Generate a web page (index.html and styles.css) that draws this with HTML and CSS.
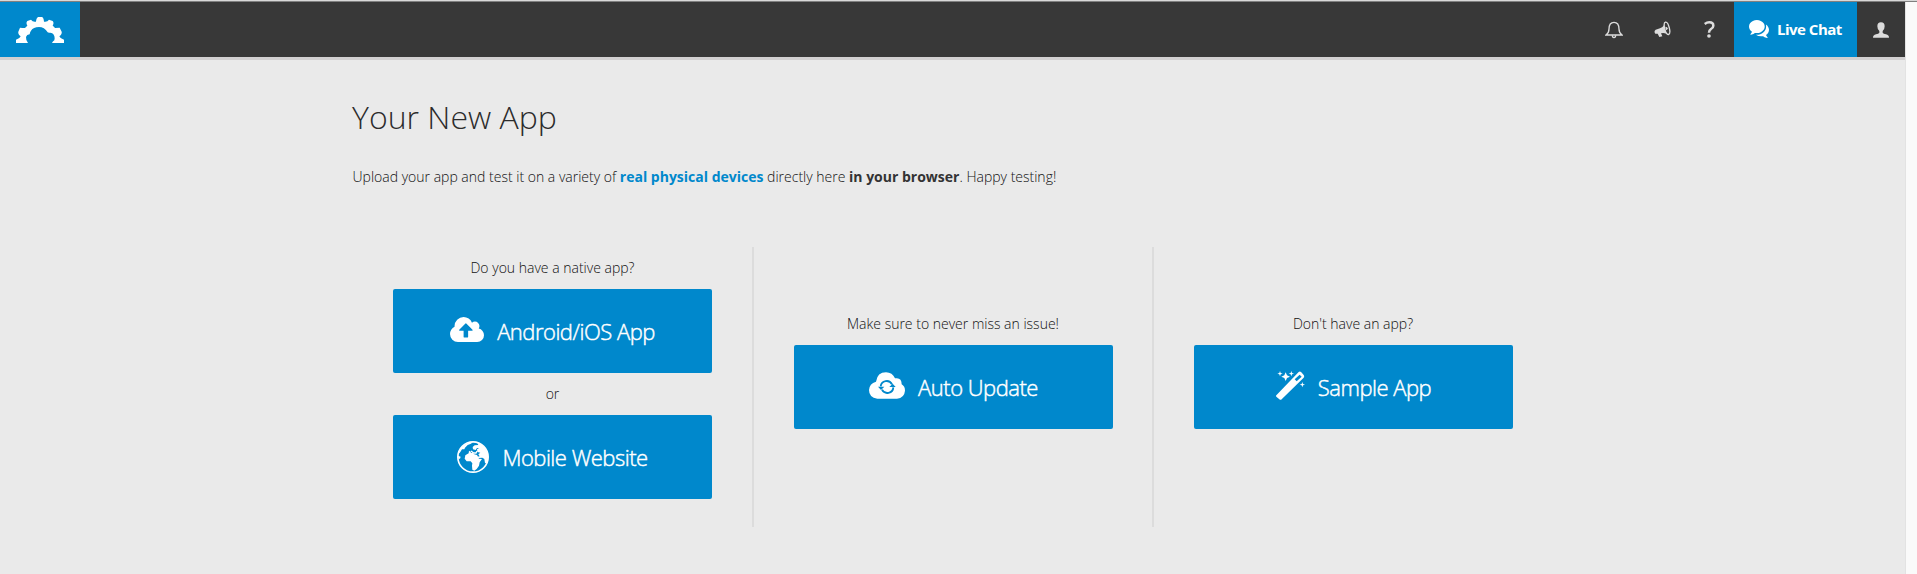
FILE: index.html
```html
<!DOCTYPE html>
<html lang="en">
<head>
<meta charset="utf-8">
<title>Your New App</title>
<link rel="stylesheet" href="styles.css">
</head>
<body>
<div class="window-edge"></div>
<div class="frame">
  <div class="page">
    <header class="topbar">
      <a class="logo" aria-label="Home">
        <svg width="48" height="26" viewBox="48 51 144 78"><path fill="#fff" d="M48 129V119Q59 117 62 109Q53 101 55 95L60 83Q67 84 75 84Q79 79 82 77Q77 68 82 63L93 59Q98 67 108 65Q109 53 115 51H126Q131 53 132 65Q142 67 147 59L158 63Q163 68 158 77Q162 80 165 84L179 83L185 95Q187 101 178 109Q181 117 192 119V129H156Q158 124 163 121L164 115Q164 100 151 98Q145 99 143 97Q133 81 117 81Q100 81 93 92Q90 96 89 103Q80 104 78 111Q77 118 84 129Z"/></svg>
      </a>
      <nav class="tools">
        <svg class="bell" width="18" height="18" viewBox="0 0 54 54"><g fill="none" stroke="#dcdcdc" stroke-width="4"><path d="M3 42Q12 36 12 24Q12 4 27 4Q42 4 42 24Q42 36 51 42Z"/><path d="M22 43Q22 50 27 50Q32 50 32 43"/></g></svg>
        <svg class="horn" width="17" height="17" viewBox="0 0 51 51"><path fill="#dcdcdc" d="M34 2Q32 16 18 22L5 26Q0 29 2 35Q4 40 11 38L16 48L25 46L21 37Q33 34 43 41Z"/><ellipse cx="39" cy="22" rx="7" ry="19" transform="rotate(-14 39 22)" fill="#383838" stroke="#dcdcdc" stroke-width="4"/><path fill="#dcdcdc" d="M34 17Q41 17 41 22Q41 27 36 28Z"/></svg>
        <svg class="help" width="11" height="17" viewBox="0 0 33 51"><path fill="none" stroke="#dcdcdc" stroke-width="7.500" d="M2 9Q9 4 16 4Q28 4 28 14Q28 20 21 24Q15 28 15 35"/><circle cx="15" cy="45" r="5.500" fill="#dcdcdc"/></svg>
      </nav>
      <a class="chat">
        <svg width="20" height="18" viewBox="0 256 1792 1408" preserveAspectRatio="none"><path fill="#fff" d="M1408 768q0 139-94 257t-256.500 186.500-353.500 68.500q-86 0-176-16-124 88-278 128-36 9-86 16h-3q-11 0-20.500-8t-11.500-21q-1-3-1-6.500t.5-6.500 2-6l2.500-5 3.500-5.500 4-5 4.500-5 4-4.500q5-6 23-25t26-29.500 22.500-29 25-38.500 20.500-44q-124-72-195-177t-71-224q0-139 94-257t256.500-186.500 353.500-68.500 353.500 68.500 256.500 186.500 94 257zm384 256q0 120-71 224.500t-195 176.500q10 24 20.500 44t25 38.500 22.500 29 26 29.500 23 25q1 1 4 4.500t4.500 5 4 5 3.500 5.500l2.500 5 2 6 .5 6.500-1 6.500q-3 14-13 22t-22 7q-50-7-86-16-154-40-278-128-90 16-176 16-271 0-472-132 58 4 88 4 161 0 309-45t264-129q125-92 192-212t67-254q0-77-23-152 129 71 204 178t75 230z"/></svg>
        <span>Live Chat</span>
      </a>
      <a class="user" aria-label="Account">
        <svg width="16" height="16" viewBox="0 0 48 48"><path fill="#dcdcdc" d="M24 1Q35 1 35 13Q35 22 29 27V32Q31 35 39 37Q48 39 48 47H0Q0 39 9 37Q17 35 19 32V27Q13 22 13 13Q13 1 24 1Z"/></svg>
      </a>
    </header>
    <main class="content">
      <h1 class="title">Your New App</h1>
      <p class="intro">Upload your app and test it on a variety of <a class="link">real physical devices</a> directly here <b>in your browser</b>. Happy testing!</p>
      <div class="choices">
        <section class="choice choice-double">
          <p class="label">Do you have a native app?</p>
          <a class="button">
            <svg class="raised" width="34" height="25" viewBox="0 128 1920 1408"><path fill="#fff" d="M1280 864q0-14-9-23l-352-352q-9-9-23-9t-23 9l-351 351q-10 12-10 24 0 14 9 23t23 9h224v352q0 13 9.500 22.500t22.500 9.500h192q13 0 22.500-9.500t9.500-22.500v-352h224q13 0 22.500-9.500t9.500-22.500zm640 288q0 159-112.500 271.500t-271.500 112.500h-1088q-185 0-316.500-131.500t-131.500-316.500q0-130 70-240t188-165q-2-30-2-43 0-212 150-362t362-150q156 0 285.500 87t188.500 231q71-62 166-62 106 0 181 75t75 181q0 76-41 138 130 31 213.500 135.500t83.500 238.500z"/></svg>
            <span>Android/iOS App</span>
          </a>
          <p class="label or">or</p>
          <a class="button">
            <svg width="32" height="32" viewBox="0 0 96 96"><circle cx="48" cy="48" r="45.500" fill="none" stroke="#fff" stroke-width="5"/><path fill="#fff" d="M5 38Q8 18 28 8Q36 4 48 3L42 8L32 12L24 20L22 25L15 25L10 33ZM3 44L11 47L9 53H4Z"/><path fill="#fff" d="M60 4Q86 14 93 40Q95 54 90 68L84 66L82 54L76 50L64 51L61 47L68 46L64 40L70 35L61 33L60 25L66 21L60 21L56 27L48 25L47 18L53 13L64 12Z"/><path fill="#fff" d="M36 29L42 33L41 36L48 36L52 40L60 42L66 53L75 54L68 64L66 74L59 84L52 89L46 86L45 74L46 67L41 61L29 61L23 53L25 43L35 37Z"/><path fill="none" stroke="#fff" stroke-width="4" d="M42 30L50 36L57 36L60 30"/></svg>
            <span>Mobile Website</span>
          </a>
        </section>
        <section class="choice">
          <p class="label">Make sure to never miss an issue!</p>
          <a class="button">
            <svg class="raised" width="36" height="27" viewBox="0 0 108 81"><path fill="#fff" d="M25 80Q0 77 0 54Q1 35 21 29Q25 1 51 1Q70 1 78 19Q98 15 98 37Q108 43 108 56Q106 78 84 80Z"/><g fill="none" stroke="#0088cc" stroke-width="5.500"><path d="M35 43A18 18 0 0 1 69 37M73 46A18 18 0 0 1 39 53"/></g><path fill="#0088cc" d="M27 44H46L36 54ZM61 45H80L71 35Z"/></svg>
            <span>Auto Update</span>
          </a>
        </section>
        <section class="choice">
          <p class="label">Don't have an app?</p>
          <a class="button">
            <svg class="raised" width="29" height="29" viewBox="0 0 87 87"><path fill="#fff" fill-rule="evenodd" d="M1 73L68 3Q72 0 76 4L83 12Q86 16 83 20L17 85Q14 88 10 85L1 77Q-1 75 1 73ZM56 25L62 31L77 17L71 11Z"/><path fill="#fff" d="M29 4L33 13L42 17L33 21L29 30L25 21L16 17L25 13ZM12 0L14 6L20 8L14 10L12 16L10 10L4 8L10 6ZM46 0L48 6L54 8L48 10L46 16L44 10L38 8L44 6ZM79 33L81 39L87 41L81 43L79 49L77 43L71 41L77 39Z"/></svg>
            <span>Sample App</span>
          </a>
        </section>
      </div>
    </main>
  </div>
  <div class="scroll-track"></div>
</div>
</body>
</html>
```
FILE: styles.css
```css
* { box-sizing: border-box; }
body {
  margin: 0;
  height: 574px;
  overflow: hidden;
  background: #eaeaea;
  color: #111;
  font-family: "Open Sans", "Noto Sans", sans-serif;
  font-size: 14px;
  font-weight: 300;
}
.window-edge { height: 2px; background: #d8d8d8; border-bottom: 1px solid #808080; }
.frame { display: flex; height: 572px; }
.page { flex: 1; }
.scroll-track { width: 12px; background: #fafafa; border-left: 1px solid #e3e3e3; }
.topbar {
  display: flex;
  height: 58px;
  background: #383838;
  border-bottom: 3px solid #d2d0d1;
}
.logo { width: 80px; padding: 15px 16px; background: #0088cc; }
.logo svg, .tools svg, .chat svg, .user svg { display: block; }
.tools { display: flex; margin-left: auto; padding-top: 19px; }
.bell { margin-right: 31px; }
.horn { margin-right: 33px; }
.help { margin-right: 19px; }
.chat {
  display: flex;
  width: 123px;
  padding: 18px 0 0 15px;
  background: #0088cc;
  color: #fff;
  font-size: 15px;
  font-weight: 700;
  letter-spacing: -0.5px;
  line-height: 18px;
}
.chat span { margin-left: 8px; white-space: nowrap; }
.user { width: 48px; padding: 20px 16px; }
.content { width: 1200px; margin-left: 352px; padding-top: 35px; }
.title { margin: 0; font-size: 32px; font-weight: 300; line-height: 44px; color: #2c2c2c; }
.intro { margin: 28px 0 0; padding-left: 0.5px; line-height: 20px; }
.intro b, .link { font-weight: 700; }
.intro b { color: #333; }
.link { color: #0088cc; }
.choices { display: flex; margin-top: 60px; height: 280px; }
.choice { width: 400px; padding: 67px 40px 0; border-left: 2px solid #dcdcdc; }
.choice-double { padding-top: 11px; padding-left: 41px; border-left: 0; }
.label { margin: 0 0 11px; line-height: 20px; text-align: center; }
.or { margin-top: 11px; }
.button {
  display: flex;
  align-items: center;
  justify-content: center;
  width: 319px;
  height: 84px;
  border-radius: 2px;
  background: #0088cc;
  color: #fff;
  font-size: 22px;
  letter-spacing: -0.5px;
  -webkit-text-stroke: 0.45px #fff;
}
.button span { margin-left: 13px; white-space: nowrap; }
.raised { margin-bottom: 3px; }
```
